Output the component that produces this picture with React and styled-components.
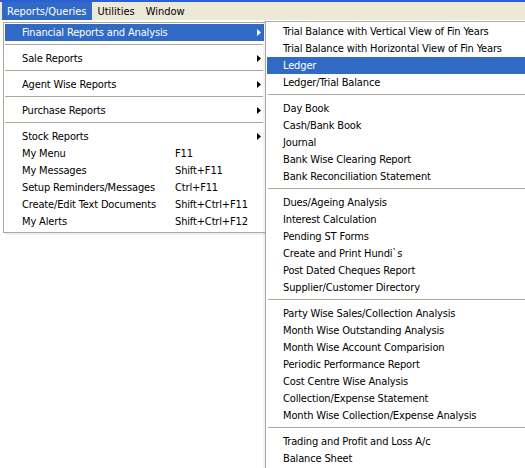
import React from 'react';
import styled, { createGlobalStyle } from 'styled-components';

const GlobalStyle = createGlobalStyle`
    html, body {
        margin: 0;
        padding: 0;
        background: #ffffff;
    }
    body {
        width: 525px;
        height: 468px;
        overflow: hidden;
        font-family: Tahoma, "DejaVu Sans Condensed", "Liberation Sans", sans-serif;
        font-size: 11px;
        letter-spacing: -0.15px;
        color: #000000;
    }
`;

const Screen = styled.div`
    width: 525px;
    height: 468px;
    overflow: hidden;
    background: #ffffff;
`;

const TitleEdge = styled.div`
    height: 2px;
    background: #2a5fd6;
`;

const MenuBar = styled.div`
    display: flex;
    align-items: stretch;
    height: 18px;
    padding-left: 2px;
    background: #ece9d8;
    letter-spacing: 0;
`;

const BarItem = styled.div`
    display: flex;
    align-items: center;
    padding: 0 6px 0 5px;
    background: ${(p) => (p.$open ? '#316ac5' : 'transparent')};
    color: ${(p) => (p.$open ? '#ffffff' : '#000000')};
`;

const Menus = styled.div`
    display: flex;
    align-items: flex-start;
`;

const Dropdown = styled.div`
    flex: none;
    width: 259px;
    margin: 2px 0 0 3px;
    padding: 1px 1px 2px 1px;
    border: 1px solid #aca899;
    background: #ffffff;
    box-shadow: 2px 2px 0 rgba(0, 0, 0, 0.06);
`;

const SubMenu = styled.div`
    flex: none;
    width: 280px;
    margin: 1px 0 0 -1px;
    padding: 1px;
    border: 1px solid #aca899;
    background: #ffffff;
    box-shadow: -2px 0 0 rgba(0, 0, 0, 0.05);
`;

const Row = styled.div`
    display: flex;
    align-items: center;
    height: 17px;
    padding-left: ${(p) => p.$indent}px;
    padding-right: 3px;
    white-space: nowrap;
    background: ${(p) => (p.$active ? '#316ac5' : 'transparent')};
    color: ${(p) => (p.$active ? '#ffffff' : '#000000')};
`;

const Label = styled.span`
    flex: none;
    width: ${(p) => (p.$width ? `${p.$width}px` : 'auto')};
`;

const Shortcut = styled.span`
    flex: 1;
`;

const Arrow = styled.svg`
    flex: none;
    margin-left: auto;
    fill: currentColor;
`;

const Separator = styled.div`
    height: 9px;
    display: flex;
    align-items: flex-start;
    &::after {
        content: '';
        flex: 1;
        height: 1px;
        margin: 3px ${(p) => p.$inset}px 0 ${(p) => p.$start}px;
        background: #aca899;
    }
`;

const reportItems = [
    { label: 'Financial Reports and Analysis', sub: true, active: true },
    'sep',
    { label: 'Sale Reports', sub: true },
    'sep',
    { label: 'Agent Wise Reports', sub: true },
    'sep',
    { label: 'Purchase Reports', sub: true },
    'sep',
    { label: 'Stock Reports', sub: true },
    { label: 'My Menu', key: 'F11' },
    { label: 'My Messages', key: 'Shift+F11' },
    { label: 'Setup Reminders/Messages', key: 'Ctrl+F11' },
    { label: 'Create/Edit Text Documents', key: 'Shift+Ctrl+F11' },
    { label: 'My Alerts', key: 'Shift+Ctrl+F12' },
];

const financialItems = [
    'Trial Balance with Vertical View of Fin Years',
    'Trial Balance with Horizontal View of Fin Years',
    'Ledger',
    'Ledger/Trial Balance',
    'sep',
    'Day Book',
    'Cash/Bank Book',
    'Journal',
    'Bank Wise Clearing Report',
    'Bank Reconciliation Statement',
    'sep',
    'Dues/Ageing Analysis',
    'Interest Calculation',
    'Pending ST Forms',
    'Create and Print Hundi`s',
    'Post Dated Cheques Report',
    'Supplier/Customer Directory',
    'sep',
    'Party Wise Sales/Collection Analysis',
    'Month Wise Outstanding Analysis',
    'Month Wise Account Comparision',
    'Periodic Performance Report',
    'Cost Centre Wise Analysis',
    'Collection/Expense Statement',
    'Month Wise Collection/Expense Analysis',
    'sep',
    'Trading and Profit and Loss A/c',
    'Balance Sheet',
];

function SubArrow() {
    return (
        <Arrow width="4" height="7" viewBox="0 0 4 7">
            <polygon points="0,0 4,3.5 0,7" />
        </Arrow>
    );
}

function App() {
    return (
        <Screen>
            <GlobalStyle />
            <TitleEdge />
            <MenuBar>
                <BarItem $open>Reports/Queries</BarItem>
                <BarItem>Utilities</BarItem>
                <BarItem>Window</BarItem>
            </MenuBar>
            <Menus>
                <Dropdown>
                    {reportItems.map((item, i) =>
                        item === 'sep' ? (
                            <Separator key={i} $start={0} $inset={1} />
                        ) : (
                            <Row key={i} $indent={17} $active={item.active}>
                                <Label $width={item.key ? 153 : 0}>
                                    {item.label}
                                </Label>
                                {item.key && <Shortcut>{item.key}</Shortcut>}
                                {item.sub && <SubArrow />}
                            </Row>
                        )
                    )}
                </Dropdown>
                <SubMenu>
                    {financialItems.map((item, i) =>
                        item === 'sep' ? (
                            <Separator key={i} $start={1} $inset={0} />
                        ) : (
                            <Row key={i} $indent={16} $active={item === 'Ledger'}>
                                <Label>{item}</Label>
                            </Row>
                        )
                    )}
                </SubMenu>
            </Menus>
        </Screen>
    );
}

export default App;
